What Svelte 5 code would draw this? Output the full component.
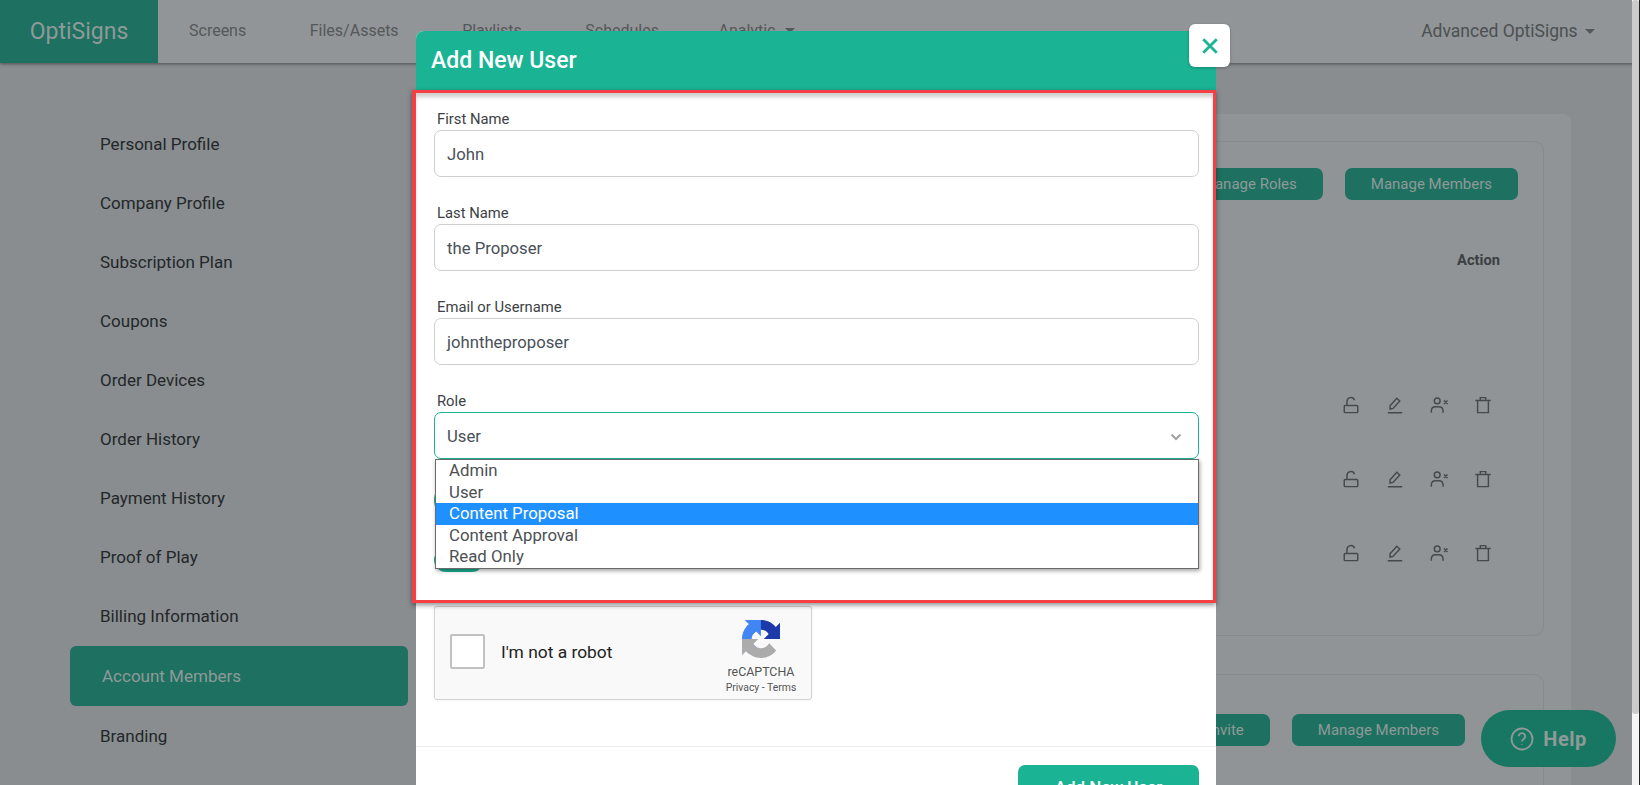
<script lang="ts">
  const navLinks = ['Screens', 'Files/Assets', 'Playlists', 'Schedules'];
  const sideItems = [
    'Personal Profile',
    'Company Profile',
    'Subscription Plan',
    'Coupons',
    'Order Devices',
    'Order History',
    'Payment History',
    'Proof of Play',
    'Billing Information',
    'Account Members',
    'Branding'
  ];
  const fields = [
    { label: 'First Name', value: 'John' },
    { label: 'Last Name', value: 'the Proposer' },
    { label: 'Email or Username', value: 'johntheproposer' }
  ];
  const roles = ['Admin', 'User', 'Content Proposal', 'Content Approval', 'Read Only'];
  const memberRows = [1, 2, 3];
</script>

<div class="page">
  <header class="topbar">
    <div class="logo">OptiSigns</div>
    <nav class="nav">
      {#each navLinks as link}
        <span>{link}</span>
      {/each}
      <span class="with-caret">Analytic <i class="caret"></i></span>
    </nav>
    <div class="account">Advanced OptiSigns <i class="caret"></i></div>
  </header>

  <div class="body">
    <aside class="sidebar">
      {#each sideItems as item}
        <div class="side-item" class:active={item === 'Account Members'}>{item}</div>
      {/each}
    </aside>

    <main class="panel">
      <section class="card first">
        <div class="card-actions">
          <button class="dim-btn">Manage Roles</button>
          <button class="dim-btn">Manage Members</button>
        </div>
        <div class="action-head">Action</div>
        <div class="rows">
          {#each memberRows as row (row)}
            <div class="row-icons">
              <svg viewBox="0 0 20 20"><path d="M3.500 10.500h13a1 1 0 0 1 1 1v6a1 1 0 0 1-1 1h-13a1 1 0 0 1-1-1v-6a1 1 0 0 1 1-1zM5.500 10.500V6a4.300 4.300 0 0 1 8.400-1.200" /></svg>
              <svg viewBox="0 0 20 20"><path d="M4.500 14.500v-3.700l7.500-8.300 3.300 3-7.500 8.300zM2 18.700h16" /></svg>
              <svg viewBox="0 0 20 20"><circle cx="8" cy="5.500" r="3.200" /><path d="M1.500 18.500v-2.500a4.500 4.500 0 0 1 4.500-4h4a4.500 4.500 0 0 1 4.500 4v2.500M15.500 5l4 4M19.500 5l-4 4" /></svg>
              <svg viewBox="0 0 20 20"><path d="M1.500 5h17M7 5V1.800h6V5M4 5v13.500h12V5" /></svg>
            </div>
          {/each}
        </div>
      </section>

      <section class="card second">
        <div class="card-actions">
          <button class="dim-btn">Send Invite</button>
          <button class="dim-btn">Manage Members</button>
        </div>
      </section>
    </main>
  </div>

  <div class="scrollbar"><div class="thumb"></div></div>

  <button class="help">
    <svg viewBox="0 0 24 24" class="help-icon">
      <circle cx="12" cy="12" r="10.500" />
      <path d="M8.800 9.300a3.200 3.200 0 1 1 4.900 2.700c-1.100.7-1.700 1.300-1.700 2.600" />
      <path d="M12 17.200v.6" />
    </svg>
    Help
  </button>

  <div class="modal">
    <div class="modal-head">Add New User</div>
    <button class="close" aria-label="Close">
      <svg viewBox="0 0 16 16"><path d="M2 2l12 12M14 2L2 14" /></svg>
    </button>

    <div class="modal-body">
      {#each fields as field}
        <div class="field">
          <span class="field-label">{field.label}</span>
          <div class="input">{field.value}</div>
        </div>
      {/each}

      <div class="field">
        <span class="field-label">Role</span>
        <div class="input focused">
          User
          <svg class="chevron" viewBox="0 0 12 8"><path d="M1.500 1.500L6 6l4.500-4.500" /></svg>
        </div>
        <div class="listbox">
          {#each roles as role}
            <div class="option" class:selected={role === 'Content Proposal'}>{role}</div>
          {/each}
        </div>
        <div class="hidden-switch top"></div>
        <div class="hidden-switch bottom"></div>
      </div>

      <div class="recaptcha">
        <div class="check"></div>
        <span class="robot">I'm not a robot</span>
        <div class="rc-brand">
          <svg viewBox="0 0 64 64" class="rc-logo">
            <path fill="#1c3aa9" d="M64 31.955l-.033-1.37V4.687l-7.160 7.160C50.948 4.674 42.033.093 32.050.093c-10.400 0-19.622 4.960-25.458 12.640l11.736 11.860a15.550 15.550 0 0 1 4.754-5.334c2.050-1.600 4.952-2.906 8.968-2.906.485 0 .86.057 1.135.163 4.976.393 9.288 3.140 11.828 7.124l-8.307 8.307 26.200.004" />
            <path fill="#4285f4" d="M31.862.002l-1.370.033H4.594l7.160 7.160C4.580 13.054 0 21.970 0 31.953c0 10.400 4.960 19.622 12.640 25.458l11.860-11.736a15.550 15.550 0 0 1-5.334-4.754c-1.600-2.050-2.906-4.952-2.906-8.968 0-.485.057-.86.163-1.135.393-4.976 3.140-9.288 7.124-11.828l8.307 8.307.004-26.200" />
            <path fill="#ababab" d="M.002 31.953l.033 1.370v25.898l7.160-7.160c5.860 7.173 14.775 11.754 24.760 11.754 10.400 0 19.622-4.960 25.458-12.640l-11.736-11.860a15.550 15.550 0 0 1-4.754 5.334c-2.050 1.600-4.952 2.906-8.968 2.906-.485 0-.86-.057-1.135-.163-4.976-.393-9.288-3.140-11.828-7.124l8.307-8.307-26.200-.004" />
          </svg>
          <div class="rc-name">reCAPTCHA</div>
          <div class="rc-links">Privacy - Terms</div>
        </div>
      </div>
    </div>

    <div class="modal-foot">
      <button class="submit">Add New User</button>
    </div>

    <div class="annotation"></div>
  </div>
</div>

<style>
  :global(body) {
    margin: 0;
    font-family: Roboto, "Liberation Sans", sans-serif;
  }

  .page {
    position: relative;
    height: 785px;
    overflow: hidden;
    background: #898d8f;
    color: #23272a;
    font-size: 16px;
  }

  .topbar {
    position: relative;
    z-index: 1;
    display: flex;
    align-items: center;
    height: 63px;
    background: #919597;
    box-shadow: 0 1px 3px rgba(0, 0, 0, 0.45);
    padding-right: 45px;
  }

  .logo {
    width: 158px;
    height: 63px;
    display: flex;
    align-items: center;
    justify-content: center;
    background: #1e7061;
    color: #8e9a98;
    font-size: 23px;
  }

  .nav {
    display: flex;
    align-items: center;
    gap: 63.500px;
    margin-left: 31px;
    margin-top: -2px;
    color: #54585a;
    flex: 1;
  }

  .with-caret {
    margin-left: -4px;
  }

  .caret {
    display: inline-block;
    width: 0;
    height: 0;
    margin-left: 6px;
    vertical-align: 3px;
    border: 5px solid transparent;
    border-top-color: #54585a;
    border-bottom: 0;
  }

  .account {
    margin-top: -1px;
    color: #4c5052;
    font-size: 17.500px;
  }

  .account .caret {
    margin-left: 3px;
  }

  .body {
    display: flex;
    align-items: flex-start;
    height: 722px;
  }

  .sidebar {
    width: 338px;
    margin-left: 70px;
    padding-top: 51px;
    flex: none;
  }

  .side-item {
    height: 59px;
    display: flex;
    align-items: center;
    padding-left: 30px;
    color: #23272a;
    font-size: 17px;
  }

  .side-item.active {
    height: 60px;
    margin-top: 1px;
    padding-left: 32px;
    background: #1e7061;
    border-radius: 6px;
    color: #8e9a98;
  }

  .panel {
    flex: 1;
    margin: 51px 69px 0 22px;
    padding: 27px 27px 0;
    height: 700px;
    background: #909496;
    border-radius: 8px;
    box-sizing: border-box;
  }

  .card {
    border: 1px solid #878b8d;
    border-radius: 10px;
    padding: 26px 25px 0;
  }

  .first {
    height: 495px;
    box-sizing: border-box;
  }

  .second {
    margin-top: 38px;
    padding-top: 39px;
    height: 200px;
    box-sizing: border-box;
    padding-right: 78px;
  }

  .card-actions {
    display: flex;
    justify-content: flex-end;
    gap: 22px;
  }

  .dim-btn {
    height: 32px;
    border: 0;
    border-radius: 7px;
    background: #1e7061;
    color: #8e9a98;
    font: 400 15px Roboto, "Liberation Sans", sans-serif;
    padding: 0 26px;
  }

  .action-head {
    text-align: right;
    font-size: 14.700px;
    font-weight: 700;
    color: #3b3f41;
    margin: 51px 18px 0 0;
  }

  .rows {
    display: flex;
    flex-direction: column;
    gap: 56px;
    margin-top: 127px;
    align-items: flex-end;
  }

  .row-icons {
    display: flex;
    gap: 26px;
    height: 18px;
    margin-right: 26px;
  }

  .row-icons svg {
    width: 18px;
    height: 18px;
    fill: none;
    stroke: #45494b;
    stroke-width: 1.600;
  }

  .scrollbar {
    position: absolute;
    z-index: 4;
    top: 0;
    right: 0;
    width: 7px;
    height: 785px;
    background: #f5f5f5;
    border-right: 1px solid #222;
  }

  .thumb {
    height: 714px;
    background: #cbcbcb;
    border-radius: 3px;
  }

  .help {
    position: absolute;
    z-index: 2;
    left: 1481px;
    top: 710px;
    width: 135px;
    height: 57px;
    display: flex;
    align-items: center;
    justify-content: center;
    gap: 9px;
    border: 0;
    border-radius: 29px;
    background: #187762;
    color: #8e9a98;
    font: 700 20px Roboto, "Liberation Sans", sans-serif;
    letter-spacing: 0.5px;
  }

  .help-icon {
    width: 24px;
    height: 24px;
    fill: none;
    stroke: #8e9a98;
    stroke-width: 1.800;
  }

  .modal {
    position: absolute;
    z-index: 5;
    left: 416px;
    top: 31px;
    width: 800px;
    height: 770px;
    background: #fff;
    border-radius: 8px 8px 0 0;
  }

  .modal-head {
    height: 59px;
    display: flex;
    align-items: center;
    padding-left: 15px;
    background: #1ab394;
    color: #fff;
    font-size: 23px;
    font-weight: 500;
    border-radius: 8px 8px 0 0;
  }

  .close {
    position: absolute;
    left: 773px;
    top: -7px;
    width: 41px;
    height: 43px;
    display: flex;
    align-items: center;
    justify-content: center;
    padding: 0;
    border: 0;
    border-radius: 6px;
    background: #fff;
    box-shadow: 0 1px 3px rgba(0, 0, 0, 0.25);
  }

  .close svg {
    width: 18px;
    height: 18px;
    fill: none;
    stroke: #1ab394;
    stroke-width: 2.500;
  }

  .modal-body {
    padding: 20px 17px 0 18px;
  }

  .field {
    position: relative;
    height: 94px;
  }

  .field-label {
    display: block;
    height: 20px;
    margin-left: 3px;
    font-size: 14.800px;
    line-height: 19px;
    color: #3c4144;
  }

  .input {
    position: relative;
    height: 47px;
    box-sizing: border-box;
    display: flex;
    align-items: center;
    padding-left: 12px;
    padding-top: 2px;
    border: 1px solid #cfcfcf;
    border-radius: 7px;
    color: #495057;
    font-size: 16.700px;
  }

  .input.focused {
    border-color: #1ab394;
  }

  .chevron {
    position: absolute;
    right: 16px;
    top: 20px;
    width: 12px;
    height: 8px;
    fill: none;
    stroke: #a3a3a3;
    stroke-width: 2.200;
  }

  .listbox {
    position: absolute;
    z-index: 2;
    left: 1px;
    right: 0;
    top: 67px;
    box-sizing: border-box;
    height: 110px;
    background: #fff;
    border: 1px solid #6a6a6a;
    box-shadow: 1px 2px 4px rgba(0, 0, 0, 0.35);
    overflow: hidden;
  }

  .option {
    height: 21.600px;
    line-height: 21px;
    padding-left: 13px;
    color: #4c5054;
    font-size: 16.800px;
  }

  .option.selected {
    background: #1e90ff;
    color: #fff;
  }

  .hidden-switch {
    position: absolute;
    left: 0;
    border: 2px solid #1ab394;
    border-radius: 12px;
    box-sizing: border-box;
  }

  .hidden-switch.top {
    top: 96px;
    width: 20px;
    height: 24px;
  }

  .hidden-switch.bottom {
    top: 156px;
    width: 50px;
    height: 24px;
    background: #1ab394;
  }

  .recaptcha {
    position: relative;
    width: 378px;
    height: 94px;
    box-sizing: border-box;
    margin-top: 120px;
    display: flex;
    align-items: center;
    border: 1px solid #d3d3d3;
    border-radius: 3px;
    background: #f9f9f9;
    box-shadow: 0 0 3px rgba(0, 0, 0, 0.08);
  }

  .check {
    width: 35px;
    height: 35px;
    box-sizing: border-box;
    margin: 0 0 3px 15px;
    background: #fff;
    border: 2px solid #c1c1c1;
    border-radius: 2px;
  }

  .robot {
    margin-left: 16px;
    margin-bottom: 3px;
    font-size: 17.400px;
    color: #222;
  }

  .rc-brand {
    position: absolute;
    right: 14px;
    top: 13px;
    width: 72px;
    display: flex;
    flex-direction: column;
    align-items: center;
  }

  .rc-logo {
    width: 38px;
    height: 38px;
  }

  .rc-name {
    margin-top: 6px;
    font-size: 12.400px;
    color: #555;
  }

  .rc-links {
    margin-top: 2px;
    font-size: 10.400px;
    color: #555;
    white-space: nowrap;
  }

  .modal-foot {
    margin-top: 46px;
    border-top: 1px solid #eeeeee;
    padding: 18px 17px 0;
    display: flex;
    justify-content: flex-end;
  }

  .submit {
    width: 181px;
    height: 44px;
    border: 0;
    border-radius: 7px;
    background: #1ab394;
    color: #fff;
    font: 500 17px Roboto, "Liberation Sans", sans-serif;
  }

  .annotation {
    position: absolute;
    z-index: 3;
    left: -4px;
    top: 59px;
    width: 804px;
    height: 513px;
    box-sizing: border-box;
    border: 3px solid #f44045;
    border-left-width: 4px;
    box-shadow: 0 2px 5px rgba(0, 0, 0, 0.45), inset 0 5px 4px -1px rgba(0, 0, 0, 0.2);
    pointer-events: none;
  }
</style>
